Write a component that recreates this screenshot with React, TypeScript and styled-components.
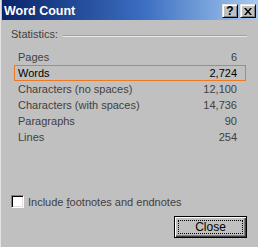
import React from 'react';
import styled, { createGlobalStyle } from 'styled-components';

type Stat = {
  label: string;
  value: string;
  selected?: boolean;
};

const stats: Stat[] = [
  { label: 'Pages', value: '6' },
  { label: 'Words', value: '2,724', selected: true },
  { label: 'Characters (no spaces)', value: '12,100' },
  { label: 'Characters (with spaces)', value: '14,736' },
  { label: 'Paragraphs', value: '90' },
  { label: 'Lines', value: '254' },
];

const GlobalStyle = createGlobalStyle`
  html, body {
    margin: 0;
    padding: 0;
    background: #c0c0c0;
  }
  body {
    font-family: 'Liberation Sans', Arial, sans-serif;
    font-size: 11px;
  }
`;

const Window = styled.div`
  width: 258px;
  height: 247px;
  box-sizing: border-box;
  background: #c0c0c0;
  border-left: 1px solid #e4e4e4;
  padding-left: 1px;
  display: flex;
  flex-direction: column;
  overflow: hidden;
`;

const TitleBar = styled.div`
  height: 20px;
  flex: none;
  display: flex;
  align-items: center;
  padding: 0 2px 0 2px;
  background: linear-gradient(to right, #0a246a 0%, #3a6ec0 55%, #a6caf0 100%);
`;

const Title = styled.div`
  flex: 1;
  color: #fff;
  font-weight: bold;
  font-size: 12.5px;
  margin-top: 1px;
`;

const CaptionButton = styled.div<{ gap?: number }>`
  width: 16px;
  height: 14px;
  box-sizing: border-box;
  margin-left: ${props => props.gap ?? 0}px;
  margin-top: 2px;
  background: #c0c0c0;
  border-top: 1px solid #e4e4e4;
  border-left: 1px solid #e4e4e4;
  border-right: 1px solid #000;
  border-bottom: 1px solid #000;
  box-shadow: inset 1px 1px 0 #fff, inset -1px -1px 0 #808080;
  display: flex;
  align-items: center;
  justify-content: center;
  color: #000;
  font-weight: bold;
  font-size: 12px;
  line-height: 12px;
`;

const Body = styled.div`
  flex: 1;
  display: flex;
  flex-direction: column;
  padding: 8px 11px 0 9px;
  color: #404040;
`;

const GroupHeader = styled.div`
  display: flex;
  align-items: center;
  height: 13px;
  line-height: 13px;
  gap: 5px;
`;

const GroupRule = styled.div`
  flex: 1;
  height: 0;
  border-top: 1px solid #a0a0a0;
  border-bottom: 1px solid #e8e8e8;
  margin-top: 2px;
`;

const StatList = styled.div`
  margin: 8px 1px 0 3px;
  display: flex;
  flex-direction: column;
`;

const StatRow = styled.div<{ selected?: boolean }>`
  height: 16px;
  box-sizing: border-box;
  display: flex;
  align-items: center;
  justify-content: space-between;
  padding: 0 8px 0 3px;
  border: 1px solid ${props => (props.selected ? '#f07820' : 'transparent')};
  color: ${props => (props.selected ? '#000' : '#404040')};
`;

const CheckRow = styled.label`
  display: flex;
  align-items: center;
  gap: 4px;
  margin-top: 50px;
  height: 13px;
`;

const CheckBox = styled.span`
  width: 13px;
  height: 13px;
  box-sizing: border-box;
  background: #fff;
  border-top: 1px solid #808080;
  border-left: 1px solid #808080;
  border-right: 1px solid #fff;
  border-bottom: 1px solid #fff;
  box-shadow: inset 1px 1px 0 #000, inset -1px -1px 0 #dfdfdf;
`;

const Footer = styled.div`
  display: flex;
  justify-content: flex-end;
  margin-top: 8px;
`;

const CloseButton = styled.button`
  width: 73px;
  height: 22px;
  box-sizing: border-box;
  padding: 3px;
  background: #c0c0c0;
  border: 1px solid #000;
  box-shadow: inset 1px 1px 0 #fff, inset -1px -1px 0 #404040, inset -2px -2px 0 #808080;
  font-family: 'Liberation Sans', Arial, sans-serif;
  font-size: 12px;
  color: #000;
  display: flex;
`;

const FocusRing = styled.span`
  flex: 1;
  border: 1px dotted #000;
  display: flex;
  align-items: center;
  justify-content: center;
`;

const Mnemonic = styled.span`
  text-decoration: underline;
`;

export default function App() {
  return (
    <Window>
      <GlobalStyle />
      <TitleBar>
        <Title>Word Count</Title>
        <CaptionButton>?</CaptionButton>
        <CaptionButton gap={2}>
          <svg width="8" height="7" viewBox="0 0 8 7">
            <path d="M0 0h2l2 2.5L6 0h2L5 3.5 8 7H6L4 4.5 2 7H0l3-3.5z" fill="#000" />
          </svg>
        </CaptionButton>
      </TitleBar>
      <Body>
        <GroupHeader>
          <span>Statistics:</span>
          <GroupRule />
        </GroupHeader>
        <StatList>
          {stats.map(s => (
            <StatRow key={s.label} selected={s.selected}>
              <span>{s.label}</span>
              <span>{s.value}</span>
            </StatRow>
          ))}
        </StatList>
        <CheckRow>
          <CheckBox />
          <span>
            Include <Mnemonic>f</Mnemonic>ootnotes and endnotes
          </span>
        </CheckRow>
        <Footer>
          <CloseButton>
            <FocusRing>Close</FocusRing>
          </CloseButton>
        </Footer>
      </Body>
    </Window>
  );
}
